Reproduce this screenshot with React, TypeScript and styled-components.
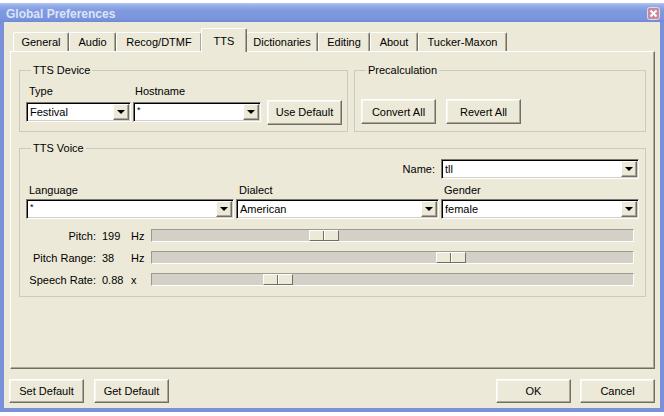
import React from 'react';
import styled, { createGlobalStyle } from 'styled-components';

const GlobalStyle = createGlobalStyle`
  *, *::before, *::after { box-sizing: border-box; }
  html, body { margin: 0; padding: 0; background: #fff; }
  body {
    width: 664px;
    height: 416px;
    overflow: hidden;
    font-family: "Liberation Sans", Arial, sans-serif;
    font-size: 11px;
    color: #000;
  }
`;

const Window = styled.div`
  display: flex;
  flex-direction: column;
  width: 664px;
  margin-top: 3px;
`;

const TitleBar = styled.div`
  display: flex;
  align-items: flex-start;
  justify-content: space-between;
  height: 19px;
  padding: 0 4px 0 6px;
  background: linear-gradient(#b4c7f3 0, #92abe8 3px, #7f99e0 8px, #7c96de 15px, #7189d8 19px);

  & > svg { margin-top: 4px; }
`;

const TitleText = styled.span`
  margin-top: 4px;
  font: bold 12px/14px "Liberation Sans", Arial, sans-serif;
  color: #dbe5f8;
`;

const Frame = styled.div`
  display: flex;
  flex-direction: column;
  height: 390px;
  background: #ece9d8;
  border: 4px solid #7a91da;
  border-top: 0;
`;

const TabStrip = styled.div`
  display: flex;
  align-items: flex-end;
  height: 23px;
  margin: 6px 0 0 9px;
`;

const Tab = styled.div<{ $w: number; $active?: boolean }>`
  display: flex;
  align-items: center;
  justify-content: center;
  width: ${p => p.$w}px;
  height: ${p => (p.$active ? 24 : 19)}px;
  background: #ece9d8;
  border: 1px solid;
  border-bottom: 0;
  border-color: #fff #716f64 transparent #fff;
  box-shadow: inset -1px 0 0 #aca899;
  border-radius: 2px 2px 0 0;
  white-space: nowrap;
  ${p => (p.$active ? 'margin: 0 -1px -1px; position: relative; z-index: 1;' : '')}
`;

const Panel = styled.div`
  display: flex;
  flex-direction: column;
  height: 318px;
  margin: 0 5px 0 6px;
  padding: 12px 8px 0 8px;
  border: 1px solid;
  border-color: #fff #716f64 #716f64 #fff;
  box-shadow: inset -1px -1px 0 #aca899;
`;

const TopRow = styled.div`
  display: flex;
  gap: 6px;
  height: 68px;
`;

const Group = styled.fieldset<{ $w?: number }>`
  margin: 0;
  min-width: 0;
  padding: ${p => (p.$w ? '8px 6px 3px 6px' : '22px 6px 3px 6px')};
  border: 1px solid #cdcabb;
  ${p => (p.$w ? `width: ${p.$w}px; flex: none;` : 'flex: 1;')}
`;

const VoiceGroup = styled.fieldset`
  margin: 10px 0 0 0;
  min-width: 0;
  padding: 4px 6px 10px 6px;
  border: 1px solid #cdcabb;
`;

const Legend = styled.legend`
  padding: 0 2px;
  margin-left: 5px;
  line-height: 13px;
`;

const DeviceGrid = styled.div`
  display: grid;
  grid-template-columns: 105px 128px 75px;
  grid-template-rows: 13px 20px;
  column-gap: 2px;
  row-gap: 4px;
  align-items: center;
`;

const FieldLabel = styled.span<{ $pad?: number }>`
  padding-left: ${p => p.$pad ?? 3}px;
  line-height: 13px;
  white-space: nowrap;
`;

const ButtonRow = styled.div<{ $gap: number }>`
  display: flex;
  gap: ${p => p.$gap}px;
`;

const Button = styled.button<{ $h?: number; $ml?: number }>`
  width: 75px;
  height: ${p => p.$h ?? 25}px;
  margin-left: ${p => p.$ml ?? 0}px;
  padding: 0;
  font: 11px "Liberation Sans", Arial, sans-serif;
  color: #000;
  background: #ece9d8;
  border: 1px solid;
  border-color: #fff #716f64 #716f64 #fff;
  box-shadow: inset -1px -1px 0 #aca899, inset 1px 1px 0 #f7f6f0;
`;

const Combo = styled.div<{ $w: number }>`
  display: flex;
  align-items: center;
  width: ${p => p.$w}px;
  height: 20px;
  padding: 0 1px 0 3px;
  background: #fff;
  border: 1px solid;
  border-color: #7a786c #fff #fff #7a786c;
  box-shadow: inset 1px 1px 0 #000, inset -1px -1px 0 #d4d0c8;
`;

const ComboText = styled.span<{ $star?: boolean }>`
  flex: 1;
  white-space: nowrap;
  overflow: hidden;
  ${p => (p.$star ? 'font-size: 9px; align-self: flex-start; margin-top: 2px;' : '')}
`;

const DropButton = styled.span`
  display: flex;
  align-items: center;
  justify-content: center;
  width: 16px;
  height: 16px;
  background: #ece9d8;
  border: 1px solid;
  border-color: #fff #716f64 #716f64 #fff;
  box-shadow: inset -1px -1px 0 #aca899;

  &::after {
    content: "";
    border-left: 4px solid transparent;
    border-right: 4px solid transparent;
    border-top: 4px solid #000;
  }
`;

const NameRow = styled.div`
  display: flex;
  justify-content: flex-end;
  align-items: center;
  gap: 6px;
`;

const VoiceGrid = styled.div`
  display: grid;
  grid-template-columns: 208px 203px 198px;
  grid-template-rows: 13px 20px;
  column-gap: 2px;
  row-gap: 2px;
  margin-top: 5px;
`;

const Sliders = styled.div`
  display: flex;
  flex-direction: column;
  gap: 9px;
  margin: 10px 5px 0 0;
`;

const SliderRow = styled.div`
  display: grid;
  grid-template-columns: 70px 23px 14px 1fr;
  column-gap: 6px;
  align-items: center;
  height: 13px;
  white-space: nowrap;
`;

const SliderLabel = styled.span`
  text-align: right;
`;

const Track = styled.div`
  position: relative;
  height: 13px;
  background: #d4d0c8;
  border: 1px solid;
  border-color: #9d9b90 #fff #fff #9d9b90;
`;

const Thumb = styled.div`
  position: absolute;
  top: 0;
  width: 30px;
  height: 11px;
  background: #ece9d8;
  border: 1px solid;
  border-color: #fff #716f64 #716f64 #fff;

  &::after {
    content: "";
    position: absolute;
    top: 0;
    bottom: 0;
    left: 13px;
    width: 1px;
    background: #716f64;
    box-shadow: 1px 0 0 #fff;
  }
`;

const BottomBar = styled.div`
  display: flex;
  justify-content: space-between;
  margin-top: 10px;
  padding: 0 5px;
`;

const CloseIcon = () => (
  <svg width="13" height="13" viewBox="0 0 13 13">
    <rect x="0.5" y="0.5" width="12" height="12" rx="2" fill="#c48c9e" stroke="#ead5de" />
    <path d="M3.5 3.5 L9.5 9.5 M9.5 3.5 L3.5 9.5" stroke="#fff" strokeWidth="2" />
  </svg>
);

function ComboBox({ w, value }: { w: number; value: string }) {
  return (
    <Combo $w={w}>
      <ComboText $star={value === '*'}>{value}</ComboText>
      <DropButton />
    </Combo>
  );
}

const tabs = [
  { name: 'General', w: 56 },
  { name: 'Audio', w: 47 },
  { name: 'Recog/DTMF', w: 86 },
  { name: 'TTS', w: 46, active: true },
  { name: 'Dictionaries', w: 72 },
  { name: 'Editing', w: 52 },
  { name: 'About', w: 48 },
  { name: 'Tucker-Maxon', w: 89 },
];

const sliders = [
  { label: 'Pitch:', value: '199', unit: 'Hz', pos: 0.348 },
  { label: 'Pitch Range:', value: '38', unit: 'Hz', pos: 0.63 },
  { label: 'Speech Rate:', value: '0.88', unit: 'x', pos: 0.246 },
];

export default function App() {
  return (
    <>
      <GlobalStyle />
      <Window>
        <TitleBar>
          <TitleText>Global Preferences</TitleText>
          <CloseIcon />
        </TitleBar>
        <Frame>
          <TabStrip>
            {tabs.map(t => (
              <Tab key={t.name} $w={t.w} $active={t.active}>{t.name}</Tab>
            ))}
          </TabStrip>
          <Panel>
            <TopRow>
              <Group $w={329}>
                <Legend>TTS Device</Legend>
                <DeviceGrid>
                  <FieldLabel>Type</FieldLabel>
                  <FieldLabel $pad={2}>Hostname</FieldLabel>
                  <span />
                  <ComboBox w={105} value="Festival" />
                  <ComboBox w={128} value="*" />
                  <Button $ml={4}>Use Default</Button>
                </DeviceGrid>
              </Group>
              <Group>
                <Legend>Precalculation</Legend>
                <ButtonRow $gap={10}>
                  <Button>Convert All</Button>
                  <Button>Revert All</Button>
                </ButtonRow>
              </Group>
            </TopRow>
            <VoiceGroup>
              <Legend>TTS Voice</Legend>
              <NameRow>
                <span>Name:</span>
                <ComboBox w={198} value="tll" />
              </NameRow>
              <VoiceGrid>
                <FieldLabel>Language</FieldLabel>
                <FieldLabel>Dialect</FieldLabel>
                <FieldLabel>Gender</FieldLabel>
                <ComboBox w={208} value="*" />
                <ComboBox w={203} value="American" />
                <ComboBox w={198} value="female" />
              </VoiceGrid>
              <Sliders>
                {sliders.map(s => (
                  <SliderRow key={s.label}>
                    <SliderLabel>{s.label}</SliderLabel>
                    <span>{s.value}</span>
                    <span>{s.unit}</span>
                    <Track>
                      <Thumb style={{ left: `calc((100% - 30px) * ${s.pos})` }} />
                    </Track>
                  </SliderRow>
                ))}
              </Sliders>
            </VoiceGroup>
          </Panel>
          <BottomBar>
            <ButtonRow $gap={10}>
              <Button $h={24}>Set Default</Button>
              <Button $h={24}>Get Default</Button>
            </ButtonRow>
            <ButtonRow $gap={9}>
              <Button $h={24}>OK</Button>
              <Button $h={24}>Cancel</Button>
            </ButtonRow>
          </BottomBar>
        </Frame>
      </Window>
    </>
  );
}
